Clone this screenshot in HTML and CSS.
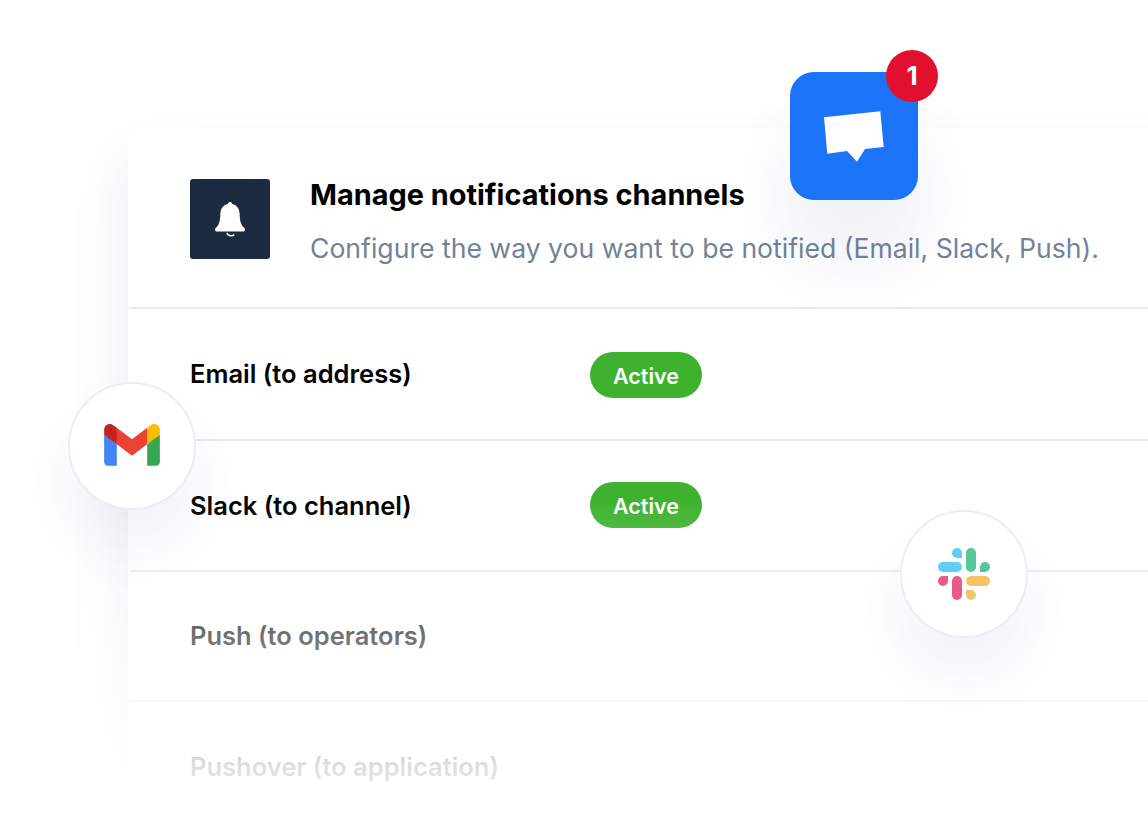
FILE: index.html
```html
<!DOCTYPE html>
<html lang="en">
<head>
    <meta charset="UTF-8">
    <meta name="viewport" content="width=device-width, initial-scale=1.0">
    <title>Manage notifications channels</title>
    <link rel="stylesheet" href="styles.css">
</head>
<body>
    <div class="scene">
        <div class="card">
            <div class="card-header">
                <div class="bell-box">
                    <svg width="30" height="35" viewBox="0 0 30 35">
                        <path fill="#fff" d="M15 0c1.200 0 2.100.9 2.200 2.100 5.100 1.100 7.400 5.100 7.500 10.400.1 6.200 1.200 10.900 4.700 13.500 1 .8.600 3.500-.8 3.500H1.400C0 29.500-.4 26.800.6 26c3.500-2.600 4.600-7.300 4.700-13.500.1-5.300 2.400-9.300 7.500-10.400C12.900.9 13.800 0 15 0z"/>
                        <path fill="none" stroke="#fff" stroke-width="1.600" d="M12 30.800c.5 3 5 3.900 7.300 1.800"/>
                    </svg>
                </div>
                <div class="header-text">
                    <h1>Manage notifications channels</h1>
                    <p>Configure the way you want to be notified (Email, Slack, Push).</p>
                </div>
            </div>
            <div class="row row-first">
                <span class="row-label">Email (to address)</span>
                <span class="pill">Active</span>
            </div>
            <div class="row">
                <span class="row-label">Slack (to channel)</span>
                <span class="pill">Active</span>
            </div>
            <div class="row">
                <span class="row-label">Push (to operators)</span>
            </div>
            <div class="row">
                <span class="row-label">Pushover (to application)</span>
            </div>
        </div>

        <div class="fade"></div>

        <div class="chat-box">
            <svg width="128" height="128" viewBox="0 0 128 128">
                <polygon fill="#fff" points="34,45.300 90.300,39.300 93.700,75 75,77 67,89.700 57,79 37.300,81.700"/>
            </svg>
            <span class="badge">1</span>
        </div>

        <div class="circle circle-gmail">
            <svg class="gmail-logo" width="56" height="42" viewBox="0 0 256 193">
                <path fill="#4285F4" d="M58.182 192.050V93.140L27.507 65.077 0 49.504v125.091c0 9.658 7.825 17.455 17.455 17.455h40.727Z"/>
                <path fill="#34A853" d="M197.818 192.050h40.727c9.659 0 17.455-7.826 17.455-17.455V49.505l-31.156 17.837-27.026 25.798v98.910Z"/>
                <path fill="#EA4335" d="m58.182 93.140-4.174-38.647 4.174-36.989L128 69.868l69.818-52.364 4.669 34.992-4.669 40.644L128 145.504z"/>
                <path fill="#FBBC04" d="M197.818 17.504V93.140L256 49.504V26.231c0-21.585-24.640-33.890-41.890-20.945l-16.292 12.218Z"/>
                <path fill="#C5221F" d="M0 49.504l26.759 20.070L58.182 93.140V17.504L41.890 5.286C24.610-7.660 0 4.646 0 26.230v23.273Z"/>
            </svg>
        </div>

        <div class="circle circle-slack">
            <svg width="52" height="52" viewBox="0 0 52 52">
                <path fill="#5fcdf5" d="M19 0a5 5 0 0 0 0 10h5V5a5 5 0 0 0-5-5z"/>
                <rect fill="#5fcdf5" x="0" y="14" width="24" height="10" rx="5"/>
                <rect fill="#58c69b" x="28" y="0" width="10" height="24" rx="5"/>
                <path fill="#58c69b" d="M42 24v-5a5 5 0 1 1 5 5z"/>
                <path fill="#ea5a86" d="M10 28H5a5 5 0 1 0 5 5z"/>
                <rect fill="#ea5a86" x="14" y="28" width="10" height="24" rx="5"/>
                <rect fill="#f3c566" x="28" y="28" width="24" height="10" rx="5"/>
                <path fill="#f3c566" d="M28 42h5a5 5 0 1 1-5 5z"/>
            </svg>
        </div>
    </div>
</body>
</html>
```

FILE: styles.css
```css
html, body {
    margin: 0;
    padding: 0;
    background: #fff;
}
body {
    font-family: "Inter", "Liberation Sans", sans-serif;
    color: #000;
}
.scene {
    position: relative;
    width: 1148px;
    height: 820px;
    padding: 128px 0 0 128px;
    box-sizing: border-box;
    overflow: hidden;
}
.card {
    background: #fff;
    width: 1100px;
    height: 800px;
    border-radius: 14px;
    box-shadow: 0 30px 60px rgba(80, 90, 150, 0.11);
}
.card-header {
    display: flex;
    align-items: flex-start;
    gap: 40px;
    margin-left: 2px;
    padding: 51px 0 43px 60px;
    border-bottom: 2px solid #e8eaed;
}
.bell-box {
    width: 80px;
    height: 80px;
    flex: none;
    border-radius: 3px;
    background: #1c2b3f;
    display: flex;
    align-items: center;
    justify-content: center;
}
.header-text h1 {
    margin: 0;
    font-size: 28.900px;
    line-height: 32px;
    font-weight: 700;
}
.header-text p {
    margin: 21px 0 0;
    font-size: 26.600px;
    line-height: 32px;
    color: #72829a;
    white-space: nowrap;
}
.row {
    display: flex;
    align-items: center;
    height: 128.500px;
    margin-left: 2px;
    padding-left: 60px;
    border-bottom: 2px solid #e8eaed;
}
.row-first {
    height: 130px;
}
.row-label {
    width: 400px;
    flex: none;
    font-size: 25.500px;
    font-weight: 600;
}
.row-first .row-label {
    margin-top: -2px;
}
.pill {
    width: 112px;
    height: 46px;
    box-sizing: border-box;
    padding-top: 2px;
    border-radius: 23px;
    background: #3eb22e;
    color: #fff;
    font-size: 21.500px;
    font-weight: 600;
    display: flex;
    align-items: center;
    justify-content: center;
}
.row-first .pill {
    margin-top: 2px;
}
/* whitens the lower rows */
.fade {
    position: absolute;
    left: 0;
    right: 0;
    top: 500px;
    bottom: 0;
    background: linear-gradient(to bottom,
        rgba(255, 255, 255, 0) 0%,
        rgba(255, 255, 255, 0.44) 42%,
        rgba(255, 255, 255, 0.87) 83%,
        rgba(255, 255, 255, 0.96) 100%);
}
.chat-box {
    position: absolute;
    left: 790px;
    top: 72px;
    width: 128px;
    height: 128px;
    border-radius: 24px;
    background: #1b73f8;
    box-shadow: 0 60px 70px rgba(80, 90, 150, 0.09);
}
.chat-box svg {
    display: block;
}
.badge {
    position: absolute;
    left: 96px;
    top: -22px;
    width: 52px;
    height: 52px;
    border-radius: 50%;
    background: #e2102f;
    color: #fff;
    font-size: 26px;
    font-weight: 700;
    line-height: 52px;
    text-align: center;
}
.circle {
    position: absolute;
    width: 128px;
    height: 128px;
    box-sizing: border-box;
    border: 2px solid #eceef6;
    border-radius: 50%;
    background: #fff;
    display: flex;
    align-items: center;
    justify-content: center;
    box-shadow: 0 36px 60px rgba(80, 90, 150, 0.08);
}
.circle-gmail {
    left: 68px;
    top: 382px;
}
.gmail-logo {
    margin-top: -2px;
}
.circle-slack {
    left: 900px;
    top: 510px;
}
```
